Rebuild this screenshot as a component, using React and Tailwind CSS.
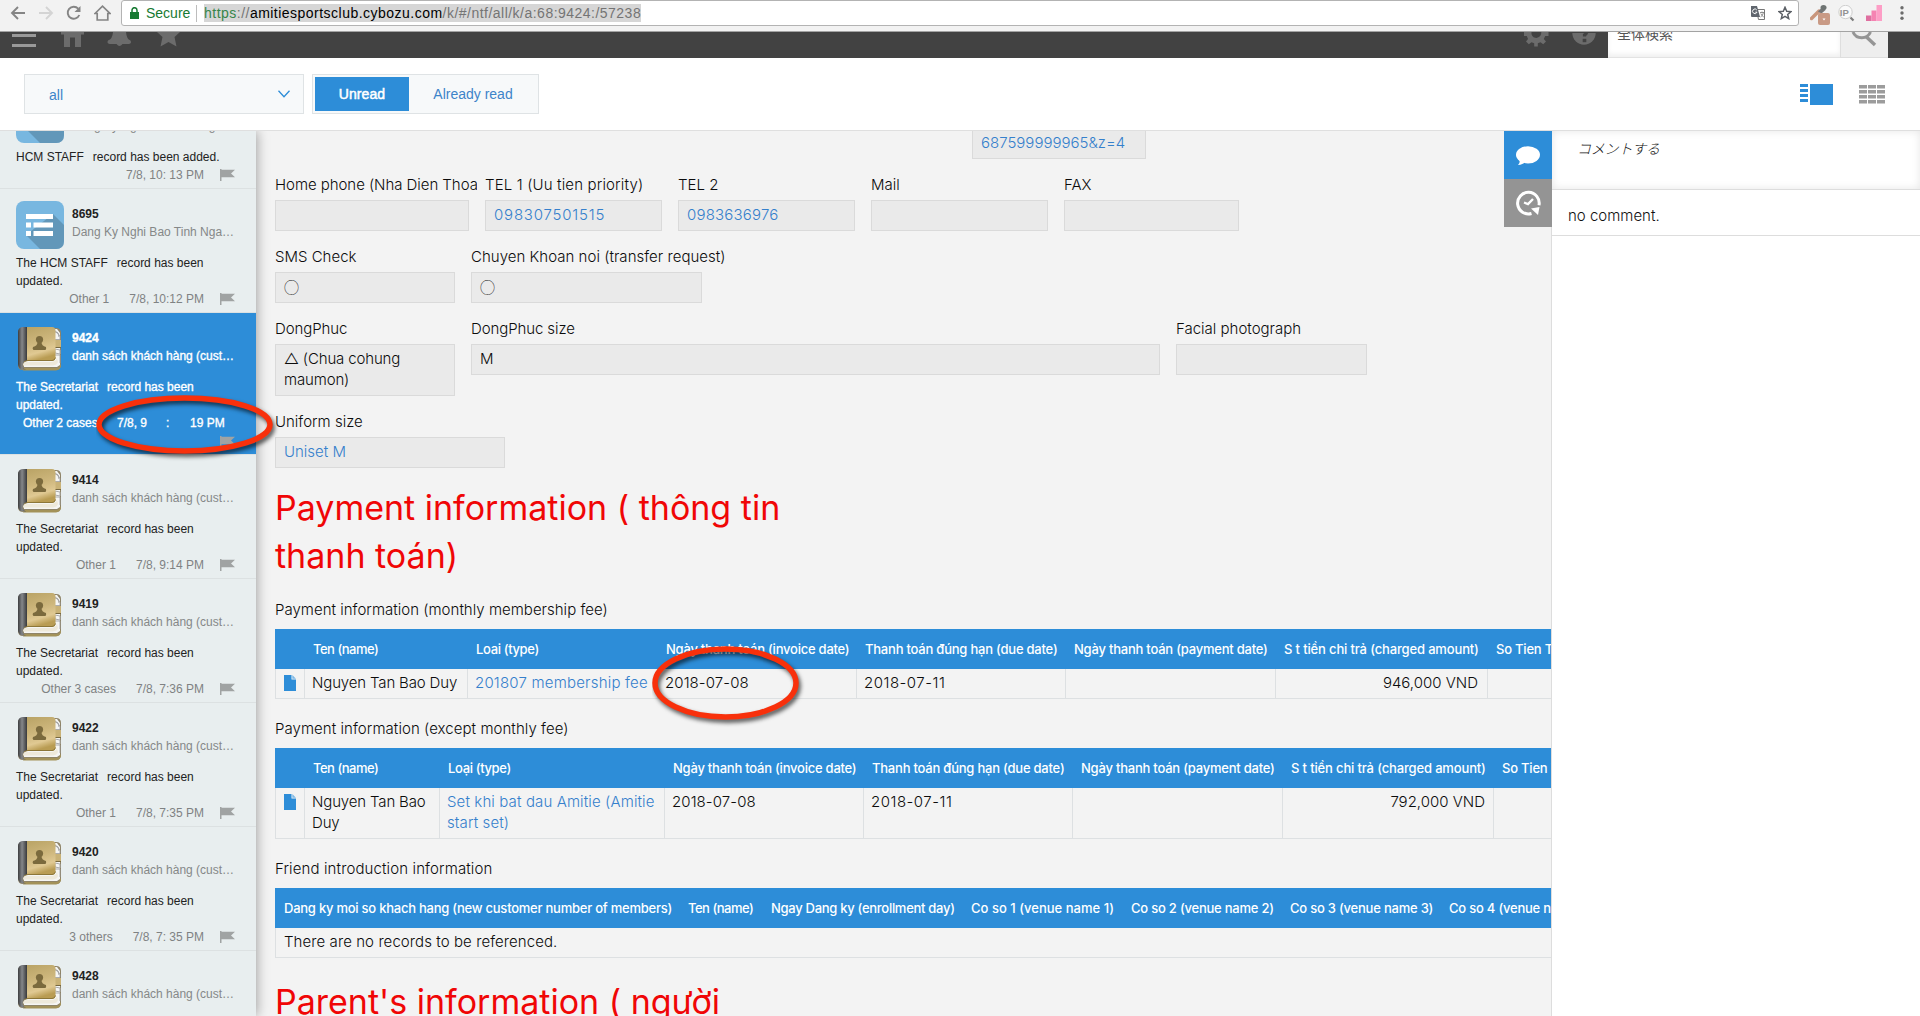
import React from "react";

const UI = "font-['Inter','Liberation_Sans',sans-serif] font-light";

/* ---------- icons ---------- */
function BookIcon() {
  return (
    <svg width="48" height="48" viewBox="0 0 48 48" className="shrink-0">
      <defs>
        <linearGradient id="cover" x1="0" y1="0" x2="0.25" y2="1">
          <stop offset="0" stopColor="#b9a365" />
          <stop offset="0.5" stopColor="#cdb67c" />
          <stop offset="0.8" stopColor="#e0c993" />
          <stop offset="1" stopColor="#b99c53" />
        </linearGradient>
        <linearGradient id="spine" x1="0" y1="0" x2="1" y2="0">
          <stop offset="0" stopColor="#3c3d3f" />
          <stop offset="0.45" stopColor="#85878a" />
          <stop offset="1" stopColor="#38393b" />
        </linearGradient>
      </defs>
      <path d="M7 3h33q5 0 5 5v32q0 5-5 5H7q-5 0-5-5V8q0-5 5-5z" fill="#8f8468" />
      <path d="M37 4h4l3 4v32l-3 2H8v-6h29z" fill="#f5f5f3" />
      <path d="M8 43h33q3-1 4-4v2q-1 4-5 4.500H7z" fill="#a39259" />
      <path d="M39 6q4 1 4 6M39 24l5 1v4l-5-1z" fill="none" stroke="#aaa" strokeWidth="1" />
      <path d="M39 15h6v7h-6z" fill="#c9b277" />
      <path d="M38 22.500h7" stroke="#77683f" strokeWidth="1" />
      <path d="M38 6.500q5 1 6 5v3h-5M39 30h5v8" fill="none" stroke="#999" strokeWidth="0.800" />
      <path d="M6 2h5v34q-4 0-4.500 4 .5 4 3.500 4.500Q2 45 2 39V7q0-4 4-5z" fill="url(#spine)" />
      <path d="M11 2h25q3.500 0 3.500 4v26q0 4-4 4H11z" fill="url(#cover)" />
      <path d="M7 40q0-3 4-3h25q4-1 5-4l1 4q-1 3-5 3.500H7z" fill="#eee9da" />
      <path d="M8 37q2-1.500 4-1.500h24q3 0 3.500-3" fill="none" stroke="#8c7638" strokeWidth="1" />
      <circle cx="23.500" cy="14.500" r="3.600" fill="#7b6a3d" />
      <path d="M21.500 17h4q0 4 4.500 5 .5 2-.5 3h-12q-1.500-1-.5-3 4.500-1 4.500-5z" fill="#7b6a3d" />
    </svg>
  );
}

function ListIcon() {
  return (
    <svg width="48" height="48" viewBox="0 0 48 48" className="shrink-0">
      <rect width="48" height="48" rx="8" fill="#78b7e0" />
      <path d="M37 13l11 11v16q0 8-8 8H24L10 34z" fill="#6297b9" />
      <path d="M10 13h27v5H10zM10 21.500h5v5h-5zM17.500 21.500H37v5H17.500zM10 30h5v5h-5zM17.500 30H37v5H17.500z" fill="#fff" />
    </svg>
  );
}

function Flag({ className = "" }) {
  return (
    <svg width="15" height="12" viewBox="0 0 15 12" className={"shrink-0 " + className}>
      <path d="M0 0h1.500v12H0zM1.500 .8H15l-4 3.700L15 8.300H1.500z" fill="#a0a3a3" />
    </svg>
  );
}

function DocIcon() {
  return (
    <svg width="12" height="16" viewBox="0 0 12 16">
      <path d="M0 0h7.500v4.500H12V16H0z" fill="#2d8dd8" />
      <path d="M8.300 0L12 3.800H8.300z" fill="#7db9e6" />
    </svg>
  );
}

/* ---------- browser chrome ---------- */
function BrowserBar() {
  return (
    <div className="flex h-8 shrink-0 border-b border-[#a3a3a3] bg-[#f2f2f2]">
      <div className="flex h-[26px] w-[121px] shrink-0 items-center gap-[12px] pl-[10px]">
        <svg width="16" height="16" viewBox="0 0 16 16" fill="none" stroke="#858585" strokeWidth="1.900"><path d="M15 8H2M8 2L2 8l6 6" /></svg>
        <svg width="16" height="16" viewBox="0 0 16 16" fill="none" stroke="#d4d4d4" strokeWidth="1.900"><path d="M1 8h13M8 2l6 6-6 6" /></svg>
        <svg width="16" height="16" viewBox="0 0 16 16" fill="none" stroke="#858585" strokeWidth="1.900"><path d="M13.300 10A6 6 0 1 1 12.200 3.700" /><path d="M14.500 1v6h-6z" fill="#858585" stroke="none" /></svg>
        <svg width="17" height="16" viewBox="0 0 17 16" fill="none" stroke="#858585" strokeWidth="1.700"><path d="M1 8.500L8.500 1.200 16 8.500h-2.200v6.500H3.200V8.500z" /></svg>
      </div>
      <div className="flex h-[26px] w-[1678px] shrink-0 items-center rounded-[3px] border border-[#b3b3b3] bg-white pl-[8px] font-['Liberation_Sans',sans-serif] text-[14px] leading-[18px]">
        <svg width="9" height="12" viewBox="0 0 9 12"><path d="M0 5h9v7H0z" fill="#177a32" /><path d="M2 5.500V3.200a2.500 2.500 0 0 1 5 0v2.300" fill="none" stroke="#177a32" strokeWidth="1.500" /></svg>
        <span className="ml-[7px] w-[44px] text-[#177a32]">Secure</span>
        <span className="ml-[6px] h-[17px] w-px bg-[#bdbdbd]" />
        <span className="ml-[7px] bg-[#d6d6d6] tracking-[0.48px] whitespace-nowrap text-[#747474]">
          <span className="text-[#35854a]">https</span>://<span className="text-black">amitiesportsclub.cybozu.com</span>/k/#/ntf/all/k/a:68:9424:/57238
        </span>
        <div className="ml-auto flex items-center gap-[13px] pr-[6px]">
          <svg width="14" height="14" viewBox="0 0 14 14">
            <path d="M5.500 3.500h8v10h-6z" fill="#fff" stroke="#777" strokeWidth="1" />
            <path d="M0 0h6l3 11H1q-1 0-1-1z" fill="#60666e" />
            <path d="M5.800 4A2.300 2.300 0 1 0 6 6.200H4.300" fill="none" stroke="#fff" strokeWidth="1" />
            <path d="M9 6.500h4M11 5.500v1M12.500 6.500q-.5 3-3 4.500M9.800 7.500q1 2.500 3 3.500" fill="none" stroke="#777" strokeWidth=".8" />
          </svg>
          <svg width="14" height="14" viewBox="0 0 14 14" fill="none" stroke="#5c6066" strokeWidth="1.500"><path d="M7 1.300l1.700 3.900 4.200.4-3.200 2.800 1 4.200L7 10.400l-3.700 2.200 1-4.200L1.100 5.600l4.200-.4z" /></svg>
        </div>
      </div>
      <div className="flex h-[26px] items-center pl-[11px]">
        <svg width="21" height="22" viewBox="0 0 21 22" className="mt-[4px]">
          <path d="M1.500 14.500L9 7" stroke="#c9967c" strokeWidth="3.500" strokeLinecap="round" />
          <path d="M8 7.500l4.500-4.500 3 3-4 3.500z" fill="#777" /><ellipse cx="13.500" cy="3.500" rx="3" ry="2.600" fill="#6f7473" />
          <rect x="8" y="9" width="12" height="12" rx="2" fill="#c99a85" /><path d="M12.500 14.500h3l-1.500 2z" fill="#fff" />
        </svg>
        <svg width="17" height="17" viewBox="0 0 17 17" className="ml-[7px]">
          <circle cx="7.500" cy="7" r="6.700" fill="#fafafa" stroke="#cfcfcf" />
          <text x="1.800" y="10.600" fontSize="9.500" fontWeight="bold" fill="#929292" fontFamily="Liberation Sans">IP</text>
          <path d="M12.500 12.500l3 3" stroke="#7c7c7c" strokeWidth="2.200" />
        </svg>
        <svg width="16" height="16" viewBox="0 0 16 16" className="ml-[11px]">
          <path d="M0 10.500h5.500V16H0z" fill="#df6fa0" /><path d="M5.500 5.500h5V16h-5z" fill="#f583b2" /><path d="M10.500 0H16v16h-5.500z" fill="#fd9ec6" />
        </svg>
        <svg width="4" height="14" viewBox="0 0 4 14" className="ml-[18px]" fill="#6c6c6c"><circle cx="2" cy="1.800" r="1.700" /><circle cx="2" cy="7" r="1.700" /><circle cx="2" cy="12.200" r="1.700" /></svg>
      </div>
    </div>
  );
}

/* ---------- application header ---------- */
function AppHeader() {
  return (
    <div className="flex h-[26px] shrink-0 items-start overflow-hidden bg-[#424242]">
      <svg width="190" height="26" viewBox="0 0 190 26" fill="#6c6c6c">
        <path d="M12 2h24v3H12zM12 12h24v3H12z" fill="#999" />
        <path d="M61 2.500V0h23v2.500h-3V15h-6V5.500h-5V15h-6V2.500z" />
        <path d="M113 0h13q.5 7 4.500 8.500 1.500 3-1.500 3.500h-6.500q-3 4-6 0h-7q-3-.5-1.500-3.500Q112.500 7 113 0z" />
        <path d="M157 0h23l-5.500 5 2 9.500-8-4.500-8 4.500 2-9.500z" />
      </svg>
      <div className="flex-1" />
      <svg width="84" height="26" viewBox="0 0 84 26" fill="#6c6c6c">
        <path fillRule="evenodd" d="M0 0h24.500v4h-3.300l-1.400 3 2.200 2.500-2.800 2.800-2.700-2-2.700 1V14.500h-3.600v-3.200l-2.700-1-2.700 2L2 9.500 4 7 2.800 4H0zM7.500 0a4.800 4.800 0 0 0 9.600 2l.2-2z" />
        <path d="M48.300 0h23.400a11.700 11.700 0 1 1-23.400 0z" transform="translate(0 1)" />
        <path d="M62.800 0q-.5 2-2.300 3v1.600" fill="none" stroke="#424242" strokeWidth="3.200" /><path d="M58.700 6.800h3.600v3.400h-3.600z" fill="#424242" />
      </svg>
      <div className="flex h-[26px] w-[232px] items-start border-b border-[#e3e3e3] bg-white pl-[9px] shadow-[inset_0_-3px_5px_#f0f0f0]">
        <span className="-mt-[9px] font-['Noto_Sans_CJK_JP',sans-serif] text-[14px] leading-[20px] text-[#555]">全体検索</span>
      </div>
      <div className="h-[26px] w-12 border-b border-l border-[#dedede] bg-[#eeeeee]">
        <svg width="47" height="25" viewBox="0 0 47 25" fill="none" stroke="#959595"><path d="M12 0a9.500 9.500 0 0 0 17.500 0" strokeWidth="3" /><path d="M25.500 5l8.500 8" strokeWidth="3.500" /></svg>
      </div>
      <div className="w-8" />
    </div>
  );
}

function Toolbar() {
  return (
    <div className="flex h-[73px] shrink-0 items-center border-b border-[#dfdfdf] bg-white pl-6 font-['Liberation_Sans',sans-serif] text-[14px] text-[#3d84c9]">
      <div className="flex h-10 w-[280px] items-center justify-between border border-[#dfe3e5] bg-[#f7f9fa] pr-[13px] pl-6">
        <span className="pt-[2px]">all</span>
        <svg width="12" height="8" viewBox="0 0 12 8" fill="none" stroke="#2d8dd8" strokeWidth="1.300"><path d="M.5 .8l5.500 6 5.500-6" /></svg>
      </div>
      <div className="ml-2 flex h-10 w-[227px] items-center border border-[#dfe3e5] bg-[#f7f9fa] p-[2px]">
        <div className="flex h-[34px] w-[94px] items-center justify-center bg-[#2d8dd8] tracking-[0.1px] text-white [-webkit-text-stroke:0.5px]">Unread</div>
        <div className="flex-1 pl-px text-center">Already read</div>
      </div>
      <div className="ml-auto flex items-center gap-[26px] pr-[35px]">
        <svg width="33" height="21" viewBox="0 0 33 21" fill="#2d8dd8"><path d="M0 0h8v3H0zM0 5h8v3H0zM0 10h8v3H0zM0 15h8v3H0zM10 0h23v21H10z" /></svg>
        <svg width="26" height="19" viewBox="0 0 26 19" fill="#9c9c9c"><path d="M0 0h8v3.500H0zM9 0h8v3.500H9zM18 0h8v3.500H18zM0 5h8v3.500H0zM9 5h8v3.500H9zM18 5h8v3.500H18zM0 10h8v3.500H0zM9 10h8v3.500H9zM18 10h8v3.500H18zM0 15h8v3.500H0zM9 15h8v3.500H9zM18 15h8v3.500H18z" /></svg>
      </div>
    </div>
  );
}

/* ---------- notification list ---------- */
const CUSTOMERS = "danh sách khách hàng (cust…";
const STAFF = "Dang Ky Nghi Bao Tinh Nga…";
const notifications = [
  { id: "8694", sub: STAFF, list: true, who: "HCM STAFF", rest: "record has been added.", time: "7/8, 10: 13 PM" },
  { id: "8695", sub: STAFF, list: true, who: "The HCM STAFF", rest: "record has been", second: true, other: "Other 1", time: "7/8, 10:12 PM" },
  { id: "9424", sub: CUSTOMERS, active: true, who: "The Secretariat", rest: "record has been", second: true, other: "Other 2 cases" },
  { id: "9414", sub: CUSTOMERS, who: "The Secretariat", rest: "record has been", second: true, other: "Other 1", time: "7/8, 9:14 PM" },
  { id: "9419", sub: CUSTOMERS, who: "The Secretariat", rest: "record has been", second: true, other: "Other 3 cases", time: "7/8, 7:36 PM" },
  { id: "9422", sub: CUSTOMERS, who: "The Secretariat", rest: "record has been", second: true, other: "Other 1", time: "7/8, 7:35 PM" },
  { id: "9420", sub: CUSTOMERS, who: "The Secretariat", rest: "record has been", second: true, other: "3 others", time: "7/8, 7: 35 PM" },
  { id: "9428", sub: CUSTOMERS, who: "The Secretariat", rest: "record has been", second: true, other: "Other 1", time: "7/8, 7:30 PM" },
];

function Notification({ n }) {
  return (
    <div className={"shrink-0 border-b pt-3 pl-4 " + (n.active ? "h-[142px] border-[#dce1e2] bg-[#2d8dd8] text-white [-webkit-text-stroke:0.35px]" : n.second ? "h-[124px] border-[#dce1e2] text-[#222]" : "h-[106px] border-[#dce1e2] text-[#222]")}>
      <div className="flex h-[53px] gap-2">
        {n.list ? <ListIcon /> : <BookIcon />}
        <div className="pt-1 whitespace-nowrap">
          <div className="text-[12px] font-bold">{n.id}</div>
          <div className={n.active ? "" : "text-[#858888]"}>{n.sub}</div>
        </div>
      </div>
      <div className="flex gap-[9px] whitespace-nowrap"><span>{n.who}</span><span>{n.rest}</span></div>
      {n.second && <div>updated.</div>}
      {n.active ? (
        <div className="pl-[7px]">
          <div className="flex whitespace-nowrap">
            <span className="w-[94px]">{n.other}</span>
            <span className="w-[49px]">7/8, 9</span>
            <span className="w-[24px]">:</span>
            <span>19 PM</span>
          </div>
          <Flag className="mt-[4px] ml-[197px]" />
        </div>
      ) : (
        <div className="flex items-center justify-end pr-[21px] whitespace-nowrap text-[#7f8283]">
          {n.other && <span className="mr-[20px]">{n.other}</span>}
          <span className="mr-[16px]">{n.time}</span>
          <Flag />
        </div>
      )}
    </div>
  );
}

function Sidebar() {
  return (
    <div className="z-10 w-64 shrink-0 overflow-hidden bg-[#e8eeef] font-['Liberation_Sans',sans-serif] text-[12px] leading-[18px] shadow-[0_0_12px_rgba(0,0,0,0.4)]">
      <div className="-mt-12 flex flex-col">
        {notifications.map((n) => <Notification key={n.id} n={n} />)}
      </div>
    </div>
  );
}

/* ---------- record ---------- */
function Field({ label, value, link, w, tall, labelClass = "", valueClass = "" }) {
  return (
    <div className={w}>
      <div className={"h-[30px] leading-[30px] whitespace-nowrap " + labelClass}>{label}</div>
      <div className={"border border-[#dadada] bg-[#eaeaea] px-2 pt-[3px] " + (tall ? "h-[52px] " : "h-[31px] whitespace-nowrap ") + (link ? "text-[#3580cc] " : "") + valueClass}>{value}</div>
    </div>
  );
}

function Table({ cols, heads, children }) {
  return (
    <div className="mt-1 w-[1700px] border-l border-[#dde0e2]">
      <div className={"-ml-px grid h-10 items-center bg-[#2d8dd8] text-[13px] font-medium whitespace-nowrap text-white " + cols}>
        {heads.map(([t, c], i) => <div key={i} className={"pl-[9px] " + c}>{t}</div>)}
      </div>
      {children}
    </div>
  );
}

function Row({ cols, cells, h }) {
  return (
    <div className={"-ml-px grid border-b border-[#dde0e2] " + cols + " " + h}>
      {cells.map(([t, c], i) => (
        <div key={i} className={"border-[#dde0e2] pt-[3px] " + (i === 0 ? "pl-[9px] " : "border-l pl-[7px] ") + c}>{t}</div>
      ))}
    </div>
  );
}

const LINK = "text-[#3580cc]";
const COLS1 = "grid-cols-[29px_163px_190px_199px_209px_210px_212px_1fr]";
const COLS2 = "grid-cols-[29px_135px_225px_199px_209px_210px_211px_1fr]";
const COLS3 = "grid-cols-[404px_83px_200px_160px_159px_159px_1fr]";
const H = "tracking-[-0.22px]";
const payHeads = (loai) => [
  ["", ""],
  ["Ten (name)", "tracking-[-0.5px]"],
  [loai, "tracking-[-0.35px]"],
  ["Ngày thanh toán (invoice date)", "tracking-[-0.23px]"],
  ["Thanh toán đúng hạn (due date)", "tracking-[-0.22px]"],
  ["Ngày thanh toán (payment date)", "tracking-[-0.22px]"],
  ["S t tiền chi trả (charged amount)", "tracking-[-0.15px]"],
  ["So Tien Tra (paid amount)", H],
];

function Record() {
  return (
    <div className={"w-[1296px] shrink-0 overflow-hidden border-r border-[#dddddd] bg-[#f3f3f3] pl-[19px] text-[15px] leading-[21px] text-[#0c0c0c] " + UI}>
      <div className="ml-[697px] h-[28px] w-[174px] border border-t-0 border-[#dadada] bg-[#eaeaea] pl-2 text-[#3580cc]">
        <div className="pt-px">687599999965&amp;z=4</div>
      </div>
      <div className="mt-[11px] flex gap-4">
        <div className="-mr-2 w-[202px] overflow-hidden"><Field label="Home phone (Nha Dien Thoai)" w="w-[194px]" labelClass="tracking-[-0.05px]" /></div>
        <Field label="TEL 1 (Uu tien priority)" value="098307501515" link w="w-[177px]" labelClass="tracking-[0.15px]" valueClass="tracking-[0.8px]" />
        <Field label="TEL 2" value="0983636976" link w="w-[177px]" valueClass="tracking-[0.2px]" />
        <Field label="Mail" w="w-[177px]" />
        <Field label="FAX" w="w-[175px]" />
      </div>
      <div className="mt-[11px] flex gap-4">
        <Field label="SMS Check" value="◯" w="w-[180px]" valueClass="font-['Noto_Sans_CJK_JP',sans-serif] text-[15px]" />
        <Field label="Chuyen Khoan noi (transfer request)" value="◯" w="w-[231px]" labelClass="tracking-[0.03px]" valueClass="font-['Noto_Sans_CJK_JP',sans-serif] text-[15px]" />
      </div>
      <div className="mt-[11px] flex gap-4">
        <Field label="DongPhuc" labelClass="tracking-[-0.1px]" value={<>△ (Chua cohung<br />maumon)</>} tall w="w-[180px]" valueClass="tracking-[-0.15px]" />
        <Field label="DongPhuc size" labelClass="tracking-[-0.1px]" value="M" w="w-[689px]" />
        <Field label="Facial photograph" w="w-[191px]" />
      </div>
      <div className="mt-[11px] flex"><Field label="Uniform size" value="Uniset M" link w="w-[230px]" /></div>

      <h2 className="mt-4 text-[34px] leading-[48px] font-normal text-[#f00606]">Payment information ( thông tin<br />thanh toán)</h2>

      <div className="mt-[15px] leading-[30px] tracking-[0.02px]">Payment information (monthly membership fee)</div>
      <Table cols={COLS1} heads={payHeads("Loai (type)")}>
        <Row cols={COLS1} h="h-[30px]" cells={[
          [<div className="pt-[3px]"><DocIcon /></div>, ""],
          ["Nguyen Tan Bao Duy", "whitespace-nowrap tracking-[-0.15px]"],
          ["201807 membership fee", "whitespace-nowrap tracking-[0.2px] " + LINK],
          ["2018-07-08", "tracking-[0.08px]"], ["2018-07-11", "tracking-[0.5px]"], ["", ""],
          ["946,000 VND", "pr-[9px] text-right"], ["", ""],
        ]} />
      </Table>

      <div className="mt-[15px] leading-[30px] tracking-[0.06px]">Payment information (except monthly fee)</div>
      <Table cols={COLS2} heads={payHeads("Loại (type)")}>
        <Row cols={COLS2} h="h-[51px]" cells={[
          [<div className="pt-[3px]"><DocIcon /></div>, ""],
          [<>Nguyen Tan Bao<br />Duy</>, "whitespace-nowrap tracking-[-0.15px]"],
          [<>Set khi bat dau Amitie (Amitie<br />start set)</>, "whitespace-nowrap tracking-[0.12px] " + LINK],
          ["2018-07-08", "tracking-[0.08px]"], ["2018-07-11", "tracking-[0.5px]"], ["", ""],
          ["792,000 VND", "pr-2 text-right"], ["", ""],
        ]} />
      </Table>

      <div className="mt-[15px] leading-[30px] tracking-[0.12px]">Friend introduction information</div>
      <Table cols={COLS3} heads={[
        ["Dang ky moi so khach hang (new customer number of members)", "tracking-[-0.24px]"],
        ["Ten (name)", "tracking-[-0.5px]"],
        ["Ngay Dang ky (enrollment day)", "tracking-[-0.29px]"],
        ["Co so 1 (venue name 1)", "tracking-[0.02px]"], ["Co so 2 (venue name 2)", H], ["Co so 3 (venue name 3)", H], ["Co so 4 (venue name 4)", H],
      ]}>
        <div className="h-[30px] border-b border-[#dde0e2] pt-[3px] pl-2 tracking-[0.08px]">There are no records to be referenced.</div>
      </Table>

      <h2 className="mt-[20px] text-[34px] leading-[48px] font-normal text-[#f00606]">Parent&#39;s information ( người</h2>
    </div>
  );
}

/* ---------- comments ---------- */
function Comments() {
  return (
    <div className={"relative flex-1 bg-white text-[15px] text-[#111] " + UI}>
      <div className="absolute top-0 -left-12 w-12">
        <div className="flex h-12 items-center justify-center bg-[#2d8dd8]">
          <svg width="24" height="20" viewBox="0 0 24 20" className="mt-px"><ellipse cx="12" cy="8.800" rx="12" ry="8.600" fill="#fff" /><path d="M4 13q0 4-2 6 5-.5 7-3z" fill="#fff" /></svg>
        </div>
        <div className="flex h-12 items-center justify-center bg-[#949494]">
          <svg width="25" height="26" viewBox="0 0 25 26" fill="none" stroke="#fff"><path d="M15.500 23.500A10.800 10.800 0 1 1 23 15.200" strokeWidth="3" /><path d="M15 18.500l8.500-1.500-1.500 8z" fill="#fff" stroke="none" /><path d="M8 12.500l4 1.500 5-5" strokeWidth="2.400" /></svg>
        </div>
      </div>
      <div className="h-[59px] border-b border-[#dddddd] pt-[7px] pl-[25px] shadow-[inset_0_0_8px_rgba(0,0,0,0.1)]">
        <span className="font-['Noto_Sans_CJK_JP',sans-serif] text-[14px] leading-[20px] font-light tracking-[-0.2px] italic">コメントする</span>
      </div>
      <div className="h-[46px] border-b border-[#dddddd] pl-4 leading-[52px]">no comment.</div>
    </div>
  );
}

function Ring({ className, w, h }) {
  return (
    <svg width={w + 16} height={h + 16} className={"pointer-events-none absolute z-20 " + className}>
      <ellipse cx={w / 2} cy={h / 2} rx={w / 2 - 3} ry={h / 2 - 3} fill="none" stroke="#f8300b" strokeWidth="5.500" className="[filter:drop-shadow(2px_3px_2px_rgba(0,0,0,0.65))]" />
    </svg>
  );
}

export default function App() {
  return (
    <div className="relative flex h-[1016px] w-[1920px] flex-col overflow-hidden bg-white">
      <BrowserBar />
      <AppHeader />
      <Toolbar />
      <div className="flex min-h-0 flex-1 overflow-hidden">
        <Sidebar />
        <Record />
        <Comments />
      </div>
      <Ring className="top-[395px] left-[96px]" w={177} h={59} />
      <Ring className="top-[646px] left-[652px]" w={147} h={74} />
    </div>
  );
}
